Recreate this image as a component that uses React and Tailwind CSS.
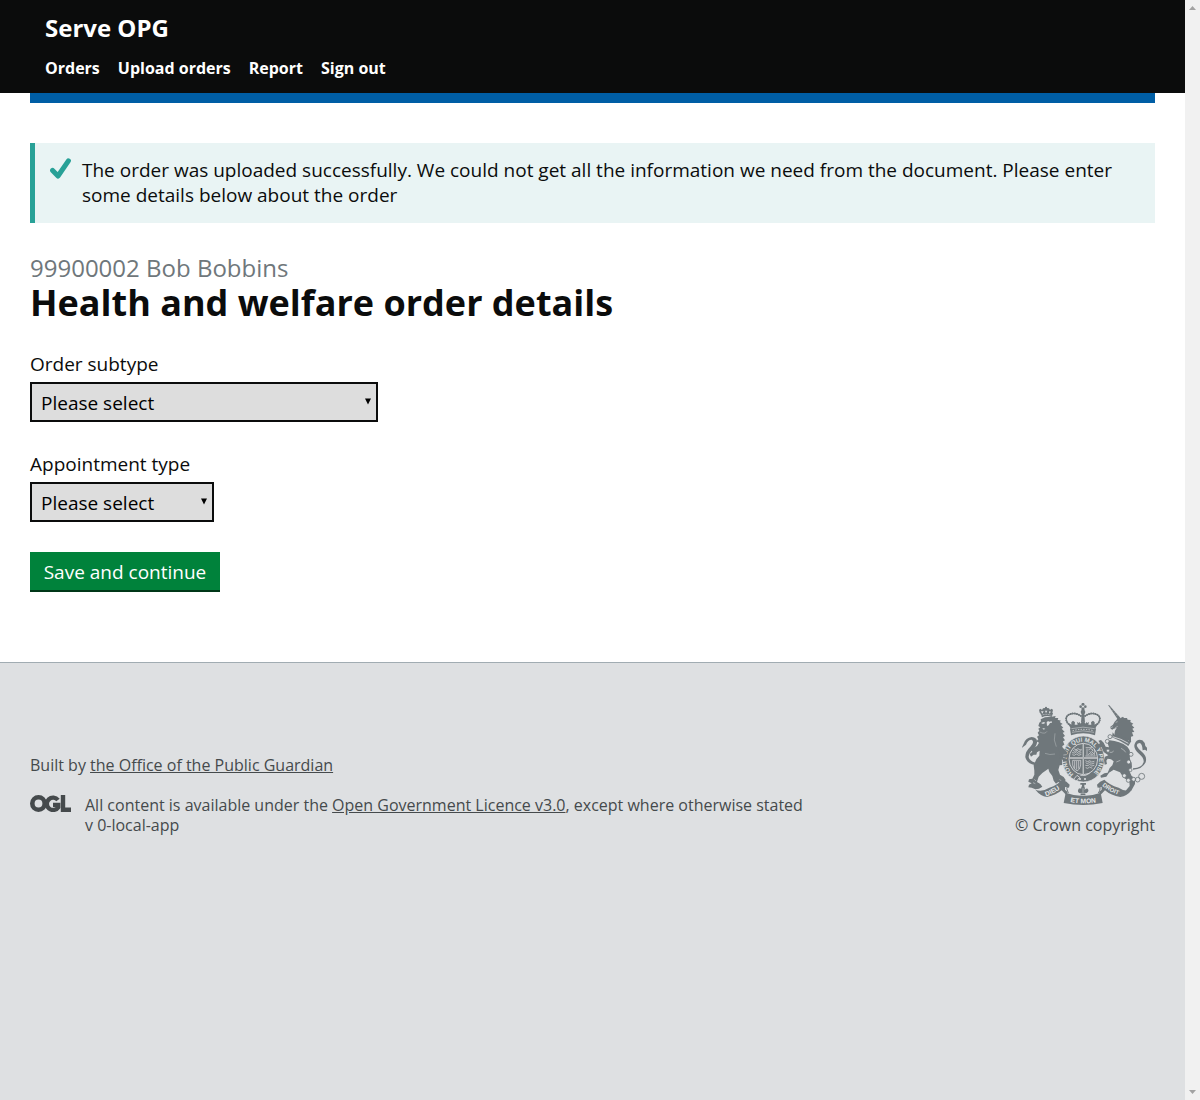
import React from "react";

const NAV_ITEMS = ["Orders", "Upload orders", "Report", "Sign out"];

function SelectField({ id, label, width }) {
  return (
    <div className="mb-[30px]">
      <label htmlFor={id} className="mb-[5px] block text-[19px] leading-[25px]">
        {label}
      </label>
      <div className={`relative max-w-full ${width}`}>
        <select
          id={id}
          name={id}
          className="block h-10 w-full appearance-none rounded-none border-2 border-[#0b0c0c] bg-[#dddddd] px-[9px] pt-[2px] text-[19px] leading-[25px] text-black"
        >
          <option value="">Please select</option>
        </select>
        <svg
          className="pointer-events-none absolute top-4 right-[7px] h-[7px] w-[6px]"
          viewBox="0 0 6 7"
          aria-hidden="true"
        >
          <path d="M0 0.5h6L3 6.5z" fill="#000" />
        </svg>
      </div>
    </div>
  );
}

function RoyalArms() {
  return (
    <svg
      className="h-[102px] w-[125px]"
      viewBox="51 39 375 306"
      fill="#6f777b"
      aria-hidden="true"
    >
      <defs>
        <path id="garter" d="M206 252A49 53 0 1 1 268 246" />
        <path id="scroll-left" d="M123 319Q150 310 176 289" />
        <path id="scroll-right" d="M291 287Q318 309 352 318" />
        <path id="scroll-mid" d="M196 336Q234 344 282 336" />
      </defs>

      {/* lion's crown */}
      <path d="M104 68l-2-9 5-3 4 4 3-5 6-1 3-3 3 3 6 1 3 5 4-4 5 3-2 9 2 2-4 11q-15-6-29 1l-5-12z" />
      <path d="M108 64l4 7 4-7zM120 62l3 8 4-8zM132 64l1 7 5-6z" fill="#dee0e2" />
      <path d="M109 76q14-6 30 0" stroke="#dee0e2" strokeWidth="2" strokeDasharray="3 2" fill="none" />
      <circle cx="123" cy="53" r="3" />

      {/* lion */}
      <path d="M107 88L120 82 140 80 152 78 150 84 160 84 158 89 168 92 164 96 173 102 167 105 175 113 170 116 179 126 173 128 180 138 174 142 180 151 174 154 178 164 172 168 172 225 164 226 160 240 165 254 176 261 182 270 178 277 168 281 160 276 153 281 146 272 142 258 133 246 130 236 112 249 101 260 96 276 106 282 112 290 102 296 91 298 80 293 70 292 72 284 80 280 70 275 72 268 82 266 88 254 88 242 86 226 94 208 103 197 104 182 96 187 94 194 86 194 78 200 74 192 82 185 78 180 86 173 96 168 102 158 94 154 100 148 96 140 102 136 98 128 103 122 100 116 106 112 100 108 103 98 108 94z" />
      <path d="M98 226Q66 224 61 202 60 185 76 170 90 156 80 149 69 149 63 164L50 174 56 161Q62 143 80 141 98 143 96 158 94 170 80 182 66 197 74 208 80 217 98 219z" />
      <path d="M108 99l9-3 4 3-7 3zM125 97l4-4 4 2 7-1 1 4-6 1-4 7-5 2zM112 114l9 2-5 3z" fill="#dee0e2" />
      <path d="M104 126q16 8 22-2M150 130q-6 20 4 40M120 190q14 6 30 2" stroke="#dee0e2" strokeWidth="1" fill="none" />
      <path d="M88 268l5 5M84 278l7 3M164 268l5 5" stroke="#dee0e2" strokeWidth="1.5" fill="none" />

      {/* imperial crown */}
      <circle cx="234" cy="43" r="4.5" />
      <circle cx="227" cy="50" r="4" />
      <circle cx="241" cy="50" r="4" />
      <circle cx="234" cy="57" r="5" />
      <circle cx="234" cy="66" r="7" />
      <path d="M230 70h8l2 28-6-5-6 5z" />
      <g fill="none" stroke="#6f777b" strokeWidth="6" strokeLinecap="round" strokeDasharray="0.5 6">
        <path d="M201 111Q174 91 188 76Q207 64 228 78" />
        <path d="M267 111Q294 91 280 76Q261 64 240 78" />
      </g>
      <g fill="none" stroke="#6f777b" strokeWidth="2.5">
        <path d="M201 111Q174 91 188 76Q207 64 228 78" />
        <path d="M267 111Q294 91 280 76Q261 64 240 78" />
      </g>
      <path d="M197 118L192 100 199 104 199 97 204 92 210 97 209 104 218 104 216 96 221 99 224 96 226 101 234 91 242 101 244 96 247 99 252 96 250 104 259 104 258 97 264 92 269 97 269 104 276 100 271 118Q234 107 197 118z" />
      <path d="M195 116q39-11 78 0l-3 20q-35-12-72 0z" />
      <path d="M199 116q35-9 70 0M201 127q33-9 66 0" fill="none" stroke="#dee0e2" strokeWidth="1.5" />
      <path d="M203 122q31-8 62 0" fill="none" stroke="#dee0e2" strokeWidth="2.5" strokeDasharray="4 4" />

      {/* garter and shield */}
      <ellipse cx="235" cy="207" rx="63" ry="69" stroke="#dee0e2" strokeWidth="2" />
      <ellipse cx="235" cy="207" rx="43" ry="47" fill="none" stroke="#dee0e2" strokeWidth="2.5" />
      <path d="M235 160v92M193 204h84" stroke="#dee0e2" strokeWidth="4" />
      <path d="M235 160v92M193 204h84" stroke="#6f777b" strokeWidth="1.2" />
      <g fill="none" stroke="#dee0e2" strokeWidth="2">
        <path d="M206 176l7 3 6-3 6 4 5-2M204 181l5 3 7-4 5 5 8-3M201 188l8 1 5-4 6 5 9-2M202 194l6 2 6-4 7 4 8-3" />
        <path d="M242 173h20M241 198h31M246 176v20M268 178v18M250 180l7-4 7 4-4 5 6 6-7 4-4-5-6 4M254 184l6 7" />
        <path d="M203 211h24v14q-2 15-11 18-11-6-13-18zM209 213v23M215 213v26M221 213v23" />
        <path d="M241 212l7 3 6-3 6 4 8-2M242 218l5 3 7-4 6 5 8-3M241 226l8 1 5-4 6 5 8-2M242 233l6 2 6-4 8 4" />
      </g>
      <path d="M206 268l10-12 8 6-12 14M226 256h16l12-7" fill="none" stroke="#dee0e2" strokeWidth="2.5" />
      <circle cx="225" cy="267" r="3" fill="#dee0e2" />
      <circle cx="240" cy="267" r="3" fill="#dee0e2" />
      <g
        fill="#dee0e2"
        fontFamily="'Liberation Sans', Arial, sans-serif"
        fontWeight="700"
        fontSize="18"
      >
        <text><textPath href="#garter">HONI SOIT QUI MAL Y PENSE</textPath></text>
      </g>

      {/* lion's forepaw on the garter */}
      <path d="M160 166L172 172 180 180 188 188 184 194 190 200 182 204 184 212 174 210 164 204z" />
      <path d="M184 194l-9 1M182 204l-8-2" stroke="#dee0e2" strokeWidth="1.5" />

      {/* unicorn */}
      <path d="M309 45l4 1 33 37-8 5z" />
      <path d="M316 54l3-2M322 62l4-2M328 69l4-2M334 77l5-3" stroke="#dee0e2" strokeWidth="1" />
      <path d="M334 90L341 80 345 85 354 80 357 84 366 84 368 89 377 90 376 96 385 101 380 105 388 113 382 116 388 126 381 127 385 138 378 140 378 155 328 134 330 122 335 114 326 116 322 119 317 116 316 110 324 104 329 95z" />
      <path d="M332 97l6-2M318 113l6-3M330 114l8-5" stroke="#dee0e2" strokeWidth="1.5" />
      <path d="M321 142L323 127 329 135 335 127 340 137 348 131 351 142 359 138 361 147 370 144 369 153 379 153 370 168Q346 152 321 142z" />
      <path d="M323 140q26 6 47 20" fill="none" stroke="#dee0e2" strokeWidth="2.5" />
      <path d="M322 147q24 5 44 18" fill="none" stroke="#dee0e2" strokeWidth="1" />
      <circle cx="315" cy="140" r="6" fill="none" stroke="#6f777b" strokeWidth="2.5" />
      <path d="M314 151Q344 153 367 170 379 183 375 198 373 210 380 218L381 232 373 243 380 258 390 264 390 282 380 300 368 308 362 302 374 288 373 274 356 263 345 247 326 239 312 248 304 260 288 263 286 257 298 250 308 248 314 234 322 226 326 214 318 208 308 206 304 212 306 222 299 224 297 210 300 200 310 196 296 186 290 172 282 170 278 164 285 160 280 152 288 150 296 158 302 170 312 172 308 160z" />
      <path d="M314 187q8 2 12-4M334 216l12-5M348 175q10 4 14 12" fill="none" stroke="#dee0e2" strokeWidth="1.5" />
      <circle cx="307" cy="154" r="6" fill="none" stroke="#6f777b" strokeWidth="2.5" />
      <circle cx="309" cy="182" r="5" fill="#dee0e2" stroke="#6f777b" strokeWidth="2.5" />
      <circle cx="378" cy="193" r="6" fill="#dee0e2" stroke="#6f777b" strokeWidth="2.5" />
      <circle cx="371" cy="216" r="6" fill="#dee0e2" stroke="#6f777b" strokeWidth="2.5" />
      <circle cx="376" cy="240" r="5" fill="#dee0e2" stroke="#6f777b" strokeWidth="2.5" />
      <path d="M384 235Q412 234 416 215 417 203 402 191 384 176 389 162 396 145 412 151 421 158 421 168L427 174 428 184 420 179 413 181Q412 160 403 159 394 160 396 169 400 178 412 187 427 200 422 217 412 238 384 239z" />
      <g fill="none" stroke="#6f777b" strokeWidth="2.5">
        <circle cx="358" cy="257" r="6" fill="#dee0e2" />
        <circle cx="370" cy="271" r="6" fill="#dee0e2" />
        <circle cx="386" cy="268" r="6" fill="#dee0e2" />
        <circle cx="398" cy="269" r="7" />
        <circle cx="410" cy="259" r="9" />
      </g>

      {/* scrolls */}
      <path d="M91 299q20 8 42-6 26-9 39-24 14 4 22 15l-2 9-12-2 0 8 8 7-5 8-13-13q-16 14-44 20-20-3-35-22z" />
      <path d="M381 299q-20 8-40-6-29-9-43-24-14 4-22 15l2 9 12-2 0 8-8 7 5 8 13-13q18 16 46 20 20-3 35-22z" />
      <path d="M182 308q52 20 105 0l6 31q-58 12-117 0z" />
      <path d="M189 286q-8 9 1 23M281 286q9 9-1 23" fill="none" stroke="#6f777b" strokeWidth="3" />
      <path d="M226 279h17v5h-5v5h-7v-5h-5z" />
      <path d="M234 285Q243 293 238 301 243 293 248 296 254 303 245 309L240 310 242 316H226L228 310Q214 308 221 296 228 292 230 301 225 293 234 285z" />
      <path d="M234 294v14M227 310h15" stroke="#dee0e2" strokeWidth="1.5" />
      <g
        fill="#e6e8e9"
        fontFamily="'Liberation Sans', Arial, sans-serif"
        fontWeight="700"
        fontSize="20"
      >
        <text><textPath href="#scroll-left">DIEU</textPath></text>
        <text fontSize="18"><textPath href="#scroll-right">DROIT</textPath></text>
        <text><textPath href="#scroll-mid">ET MON</textPath></text>
      </g>
    </svg>
  );
}

function OglLogo() {
  return (
    <svg
      className="h-[17px] w-[41px] shrink-0"
      viewBox="0 0 41 17"
      role="img"
      aria-label="Open Government Licence"
    >
      <g fill="none" stroke="#454a4c">
        <circle cx="8.5" cy="8.5" r="6.2" strokeWidth="4.6" />
        <path d="M28 5A6.2 6.2 0 1 0 28.3 12.2V9.8h-5.3" strokeWidth="4.3" />
        <path d="M33 0v14.8h8" strokeWidth="4.4" />
      </g>
    </svg>
  );
}

function ScrollRail() {
  return (
    <div
      className="sticky top-0 flex h-screen w-[15px] shrink-0 flex-col items-center justify-between bg-[#f1f1f1] py-[6px]"
      aria-hidden="true"
    >
      <svg className="h-1 w-[7px]" viewBox="0 0 7 4" fill="#a3a3a3">
        <path d="M0 4L3.5 0 7 4z" />
      </svg>
      <svg className="h-1 w-[7px]" viewBox="0 0 7 4" fill="#a3a3a3">
        <path d="M0 0h7L3.5 4z" />
      </svg>
    </div>
  );
}

export default function App() {
  return (
    <div className="flex bg-white font-['Open_Sans',sans-serif] text-[#0b0c0c]">
      <div className="flex min-h-screen min-w-0 flex-1 flex-col">
        <header className="bg-[#0b0c0c] px-[45px] pt-[13px] pb-[15px] text-white">
          <a href="#home" className="block text-2xl leading-[30px] font-bold">
            Serve OPG
          </a>
          <nav className="mt-[15px]">
            <ul className="flex flex-wrap gap-x-[18px]">
              {NAV_ITEMS.map((item) => (
                <li key={item}>
                  <a href="#nav" className="block text-base leading-5 font-bold">
                    {item}
                  </a>
                </li>
              ))}
            </ul>
          </nav>
        </header>

        <div className="mx-[30px] border-t-[10px] border-[#005ea5]">
          <main className="pt-10 pb-[70px]">
            <div
              role="status"
              className="mb-[30px] flex gap-[11px] border-l-[5px] border-[#28a197] bg-[#e9f4f4] p-[15px]"
            >
              <svg className="h-[21px] w-[21px] shrink-0" viewBox="0 0 21 21" aria-hidden="true">
                <path
                  d="M2.6 12.4L8 18 18.4 2.8"
                  fill="none"
                  stroke="#28a197"
                  strokeWidth="5"
                  strokeLinecap="round"
                  strokeLinejoin="round"
                />
              </svg>
              <p className="text-[19px] leading-[25px]">
                The order was uploaded successfully. We could not get all the information we need
                from the document. Please enter some details below about the order
              </p>
            </div>

            <h1 className="mb-[29px] text-4xl leading-10 font-bold">
              <span className="block text-2xl leading-[30px] font-normal text-[#6f777b]">
                99900002 Bob Bobbins
              </span>
              Health and welfare order details
            </h1>

            <form onSubmit={(event) => event.preventDefault()}>
              <SelectField id="subtype" label="Order subtype" width="w-[348px]" />
              <SelectField id="appointment" label="Appointment type" width="w-[184px]" />
              <button
                type="submit"
                className="block h-10 min-w-[190px] border-b-2 border-[#003618] bg-[#00823b] px-3 pt-[2px] text-[19px] leading-[25px] text-white"
              >
                Save and continue
              </button>
            </form>
          </main>
        </div>

        <footer className="flex-1 border-t border-[#a1acb2] bg-[#dee0e2] px-[30px] pt-10 text-base leading-5 text-[#454a4c]">
          <div className="flex items-end justify-between gap-[30px]">
            <div>
              <p className="mb-5">
                Built by{" "}
                <a href="#opg" className="underline">
                  the Office of the Public Guardian
                </a>
              </p>
              <div className="flex gap-[14px]">
                <OglLogo />
                <p>
                  All content is available under the{" "}
                  <a href="#ogl" className="underline">
                    Open Government Licence v3.0
                  </a>
                  , except where otherwise stated
                  <br />v 0-local-app
                </p>
              </div>
            </div>
            <a href="#crown" className="flex shrink-0 flex-col items-end gap-[10px]">
              <span className="pr-2">
                <RoyalArms />
              </span>
              <span>© Crown copyright</span>
            </a>
          </div>
        </footer>
      </div>
      <ScrollRail />
    </div>
  );
}
